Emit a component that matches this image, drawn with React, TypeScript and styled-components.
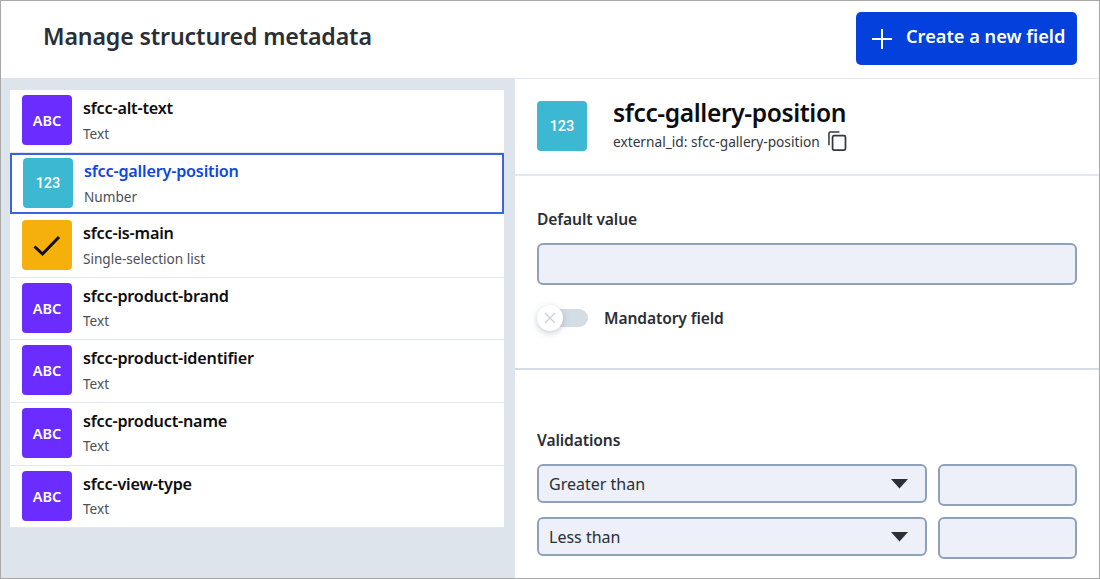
import React from "react";
import styled, { createGlobalStyle } from "styled-components";

type FieldKind = "text" | "number" | "list";

interface Field {
    name: string;
    type: string;
    kind: FieldKind;
    selected?: boolean;
}

const fields: Field[] = [
    { name: "sfcc-alt-text", type: "Text", kind: "text" },
    { name: "sfcc-gallery-position", type: "Number", kind: "number", selected: true },
    { name: "sfcc-is-main", type: "Single-selection list", kind: "list" },
    { name: "sfcc-product-brand", type: "Text", kind: "text" },
    { name: "sfcc-product-identifier", type: "Text", kind: "text" },
    { name: "sfcc-product-name", type: "Text", kind: "text" },
    { name: "sfcc-view-type", type: "Text", kind: "text" },
];

const kindColors: Record<FieldKind, string> = {
    text: "#6a2cff",
    number: "#3db8d2",
    list: "#f5b00b",
};

const TypeIcon = ({ kind }: { kind: FieldKind }) => (
    <IconTile $kind={kind}>
        {kind === "text" && <AbcLabel>ABC</AbcLabel>}
        {kind === "number" && <NumberLabel>123</NumberLabel>}
        {kind === "list" && (
            <svg width="30" height="24" viewBox="0 0 30 24" fill="none">
                <path d="M2.5 13.5 L10.5 21 L27 4" stroke="#111" strokeWidth="3" />
            </svg>
        )}
    </IconTile>
);

const Select = ({ label }: { label: string }) => (
    <SelectBox>
        {label}
        <svg width="17" height="10" viewBox="0 0 17 10">
            <path d="M0 0 H17 L8.5 9.5 Z" fill="#2b2f36" />
        </svg>
    </SelectBox>
);

export default () => (
    <>
        <GlobalStyle />
        <Page>
            <Header>
                <Title>Manage structured metadata</Title>
                <CreateButton>
                    <svg width="20" height="20" viewBox="0 0 20 20" fill="none">
                        <path d="M10 0 V20 M0 10 H20" stroke="#fff" strokeWidth="2" />
                    </svg>
                    <ButtonLabel>Create a new field</ButtonLabel>
                </CreateButton>
            </Header>
            <Body>
                <Sidebar>
                    <FieldList>
                        {fields.map((field) => (
                            <FieldRow key={field.name} $selected={field.selected}>
                                <TypeIcon kind={field.kind} />
                                <FieldText>
                                    <FieldName $selected={field.selected}>{field.name}</FieldName>
                                    <FieldType>{field.type}</FieldType>
                                </FieldText>
                            </FieldRow>
                        ))}
                    </FieldList>
                </Sidebar>
                <Detail>
                    <DetailHeader>
                        <TypeIcon kind="number" />
                        <div>
                            <DetailTitle>sfcc-gallery-position</DetailTitle>
                            <ExternalId>
                                external_id: sfcc-gallery-position
                                <svg width="19" height="20" viewBox="0 0 20 21" fill="none">
                                    <path d="M1 15 V2.5 A1.5 1.5 0 0 1 2.5 1 H12" stroke="#33373d" strokeWidth="1.6" />
                                    <rect x="4.8" y="4.8" width="13.6" height="15.2" rx="1.5" stroke="#33373d" strokeWidth="1.8" />
                                </svg>
                            </ExternalId>
                        </div>
                    </DetailHeader>
                    <DefaultSection>
                        <FieldLabel>Default value</FieldLabel>
                        <TextBox $height={42} />
                        <ToggleRow>
                            <ToggleTrack>
                                <ToggleKnob>
                                    <svg width="12" height="12" viewBox="0 0 12 12" fill="none">
                                        <path d="M1 1 L11 11 M11 1 L1 11" stroke="#c9d3e0" strokeWidth="1.3" />
                                    </svg>
                                </ToggleKnob>
                            </ToggleTrack>
                            <ToggleLabel>Mandatory field</ToggleLabel>
                        </ToggleRow>
                    </DefaultSection>
                    <ValidationSection>
                        <FieldLabel>Validations</FieldLabel>
                        <ValidationGrid>
                            <Select label="Greater than" />
                            <TextBox $height={42} />
                            <Select label="Less than" />
                            <TextBox $height={42} />
                        </ValidationGrid>
                    </ValidationSection>
                </Detail>
            </Body>
        </Page>
    </>
);

const GlobalStyle = createGlobalStyle`
    html, body {
        margin: 0;
        padding: 0;
        background: #fff;
    }
    * {
        box-sizing: border-box;
    }
`;

const Page = styled.div`
    width: 1100px;
    height: 579px;
    display: flex;
    flex-direction: column;
    overflow: hidden;
    border: 1px solid #a8a8a8;
    font-family: "Noto Sans", "Open Sans", sans-serif;
    color: #22262c;
`;

const Header = styled.header`
    flex: 0 0 77px;
    display: flex;
    align-items: center;
    justify-content: space-between;
    padding: 0 22px 4px 42px;
`;

const Title = styled.h1`
    margin: 0 0 4px;
    font-size: 23.2px;
    font-weight: 600;
    letter-spacing: -0.15px;
    color: #2a2e35;
`;

const CreateButton = styled.button`
    width: 221px;
    height: 53px;
    margin-top: 2px;
    display: flex;
    align-items: center;
    gap: 14px;
    padding: 0 0 0 16px;
    border: none;
    border-radius: 5px;
    background: #0440dc;
    color: #fff;
    font-family: inherit;
    font-size: 18.2px;
    font-weight: 600;
    white-space: nowrap;
`;

const ButtonLabel = styled.span`
    padding-bottom: 5px;
`;

const Body = styled.div`
    flex: 1;
    min-height: 0;
    display: flex;
`;

const Sidebar = styled.aside`
    flex: 0 0 514px;
    padding: 12px 11px 0 9px;
    background: #dde4ec;
`;

const FieldList = styled.ul`
    margin: 0;
    padding: 0;
    list-style: none;
    background: #fff;
`;

const FieldRow = styled.li<{ $selected?: boolean }>`
    height: ${(p) => (p.$selected ? "61.6px" : "62.6px")};
    margin-bottom: ${(p) => (p.$selected ? "1px" : "0")};
    display: flex;
    gap: 11px;
    padding: ${(p) => (p.$selected ? "3.5px 0 0 11px" : "5px 0 0 12px")};
    border: ${(p) => (p.$selected ? "2px solid #3a64dc" : "none")};
    border-bottom: ${(p) => (p.$selected ? "2px solid #3a64dc" : "1px solid #e2e8ef")};
`;

const IconTile = styled.div<{ $kind: FieldKind }>`
    flex: 0 0 50px;
    width: 50px;
    height: 50px;
    display: flex;
    align-items: center;
    justify-content: center;
    border-radius: 4px;
    background: ${(p) => kindColors[p.$kind]};
`;

const AbcLabel = styled.span`
    font-family: "Noto Sans", sans-serif;
    font-size: 14.5px;
    font-weight: 600;
    color: #fff;
`;

const NumberLabel = styled.span`
    font-family: Roboto, sans-serif;
    font-size: 14.5px;
    font-weight: 500;
    color: #fff;
`;

const FieldText = styled.div`
    display: flex;
    flex-direction: column;
`;

const FieldName = styled.span<{ $selected?: boolean }>`
    font-size: 16.2px;
    line-height: 24px;
    margin-top: 1px;
    font-weight: 600;
    letter-spacing: -0.2px;
    color: ${(p) => (p.$selected ? "#0f47dc" : "#0c0d10")};
`;

const FieldType = styled.span`
    margin-top: 3.5px;
    font-size: 13.6px;
    line-height: 20px;
    color: #4b4f56;
`;

const Detail = styled.main`
    flex: 1;
    min-width: 0;
    display: flex;
    flex-direction: column;
`;

const DetailHeader = styled.section`
    flex: 0 0 98px;
    display: flex;
    align-items: flex-start;
    gap: 26px;
    padding: 22px 22px 0 22px;
    border-top: 1px solid #e2e8ef;
    border-bottom: 2px solid #e2e8ef;
`;

const DetailTitle = styled.h2`
    margin: -3px 0 0;
    font-size: 24.6px;
    line-height: 30px;
    font-weight: 600;
    letter-spacing: -0.4px;
    color: #0c0d10;
`;

const ExternalId = styled.div`
    display: flex;
    align-items: center;
    gap: 8px;
    margin-top: 3px;
    font-size: 13.7px;
    color: #33373d;
`;

const DefaultSection = styled.section`
    flex: 0 0 194px;
    padding: 32px 22px 0 22px;
    border-bottom: 2px solid #d4dde8;
`;

const FieldLabel = styled.div`
    font-size: 15.6px;
    line-height: 22px;
    font-weight: 600;
    letter-spacing: -0.1px;
    color: #2a2e35;
`;

const TextBox = styled.div<{ $height: number }>`
    height: ${(p) => p.$height}px;
    margin-top: 13px;
    border: 2px solid #8fa1b8;
    border-radius: 6px;
    background: #edf0f8;
`;

const ToggleRow = styled.div`
    display: flex;
    align-items: center;
    gap: 16px;
    margin-top: 22px;
`;

const ToggleTrack = styled.div`
    width: 51px;
    height: 18px;
    display: flex;
    align-items: center;
    border-radius: 9px;
    background: #d4dde6;
`;

const ToggleKnob = styled.div`
    width: 26px;
    height: 26px;
    display: flex;
    align-items: center;
    justify-content: center;
    border-radius: 50%;
    background: #fff;
    box-shadow: 0 2px 6px rgba(90, 110, 140, 0.35);
`;

const ToggleLabel = styled.span`
    font-size: 15.6px;
    font-weight: 600;
    letter-spacing: -0.1px;
    color: #2a2e35;
`;

const ValidationSection = styled.section`
    flex: 1;
    padding: 59px 22px 0 22px;
`;

const ValidationGrid = styled.div`
    display: grid;
    grid-template-columns: 390px 139px;
    column-gap: 11px;
    row-gap: 11px;
    margin-top: 13px;
    align-items: start;

    ${TextBox} {
        margin-top: 0;
    }
`;

const SelectBox = styled.div`
    height: 39px;
    display: flex;
    align-items: center;
    justify-content: space-between;
    padding: 0 17px 0 10px;
    border: 2px solid #8fa1b8;
    border-radius: 6px;
    background: #edf0f8;
    font-size: 16px;
    color: #2a2e35;
`;
